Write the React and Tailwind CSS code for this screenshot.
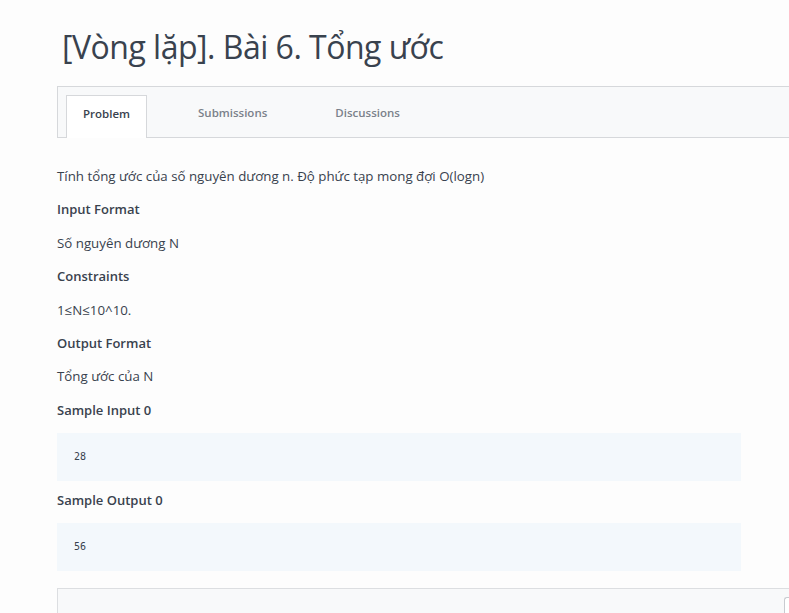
import React from "react";

const tabs = ["Problem", "Submissions", "Discussions"];

const Heading = ({ children, className = "" }) => (
  <h3 className={`font-semibold text-[13px] leading-[18px] text-[#39424e] ${className}`}>{children}</h3>
);

const Section = ({ title, children }) => (
  <>
    <Heading className="mt-[15.4px]">{title}</Heading>
    <p className="text-[13.3px] leading-[18px] text-[#39424e] mt-[15.4px]">{children}</p>
  </>
);

const SampleBox = ({ value }) => (
  <div className="mt-[14px] w-[684px] h-[48px] bg-[#f3f8fc] flex items-center pl-[17px]">
    <span className="text-[10px] text-[#39424e]" style={{ fontFamily: "'DejaVu Sans Mono', monospace" }}>{value}</span>
  </div>
);

export default function App() {
  return (
    <div className="w-[789px] h-[613px] overflow-hidden bg-[#fdfdfd]" style={{ fontFamily: "'Open Sans', sans-serif" }}>
      <div className="pl-[57px]">
        <h1 className="pl-[5px] pt-[26px] text-[32px] leading-[42px] text-[#39424e] tracking-[-0.5px]">[Vòng lặp]. Bài 6. Tổng ước</h1>

        <div className="mt-[18px] h-[52px] bg-[#f8f9fa] border-y border-l border-[#d6d8db] flex items-end pl-[8px]">
          <div className="w-[81px] h-[43px] -mb-px pb-[6px] bg-white border-t border-x border-[#d6d8db] flex items-center justify-center text-[11.5px] font-semibold text-[#39424e]">
            {tabs[0]}
          </div>
          <div className="h-[43px] pb-[6px] flex items-center ml-[51px] text-[11.5px] font-semibold text-[#7b818a]">{tabs[1]}</div>
          <div className="h-[43px] pb-[6px] flex items-center ml-[68px] text-[11.5px] font-semibold text-[#7b818a]">{tabs[2]}</div>
        </div>

        <p className="mt-[29px] text-[13.3px] leading-[18px] text-[#39424e]">
          Tính tổng ước của số nguyên dương n. Độ phức tạp mong đợi O(logn)
        </p>
        <Section title="Input Format">Số nguyên dương N</Section>
        <Section title="Constraints">1≤N≤10^10.</Section>
        <Section title="Output Format">Tổng ước của N</Section>

        <Heading className="mt-[15.4px]">Sample Input 0</Heading>
        <SampleBox value="28" />
        <Heading className="mt-[10px]">Sample Output 0</Heading>
        <SampleBox value="56" />

        <div className="mt-[17px] h-[40px] bg-[#f8f9fa] border-t border-l border-[#dcdee1] flex justify-end pt-[8px]">
          <div className="w-[5px] h-[30px] border-t border-l border-[#c8cbd0] rounded-tl-[3px] bg-white" />
        </div>
      </div>
    </div>
  );
}
